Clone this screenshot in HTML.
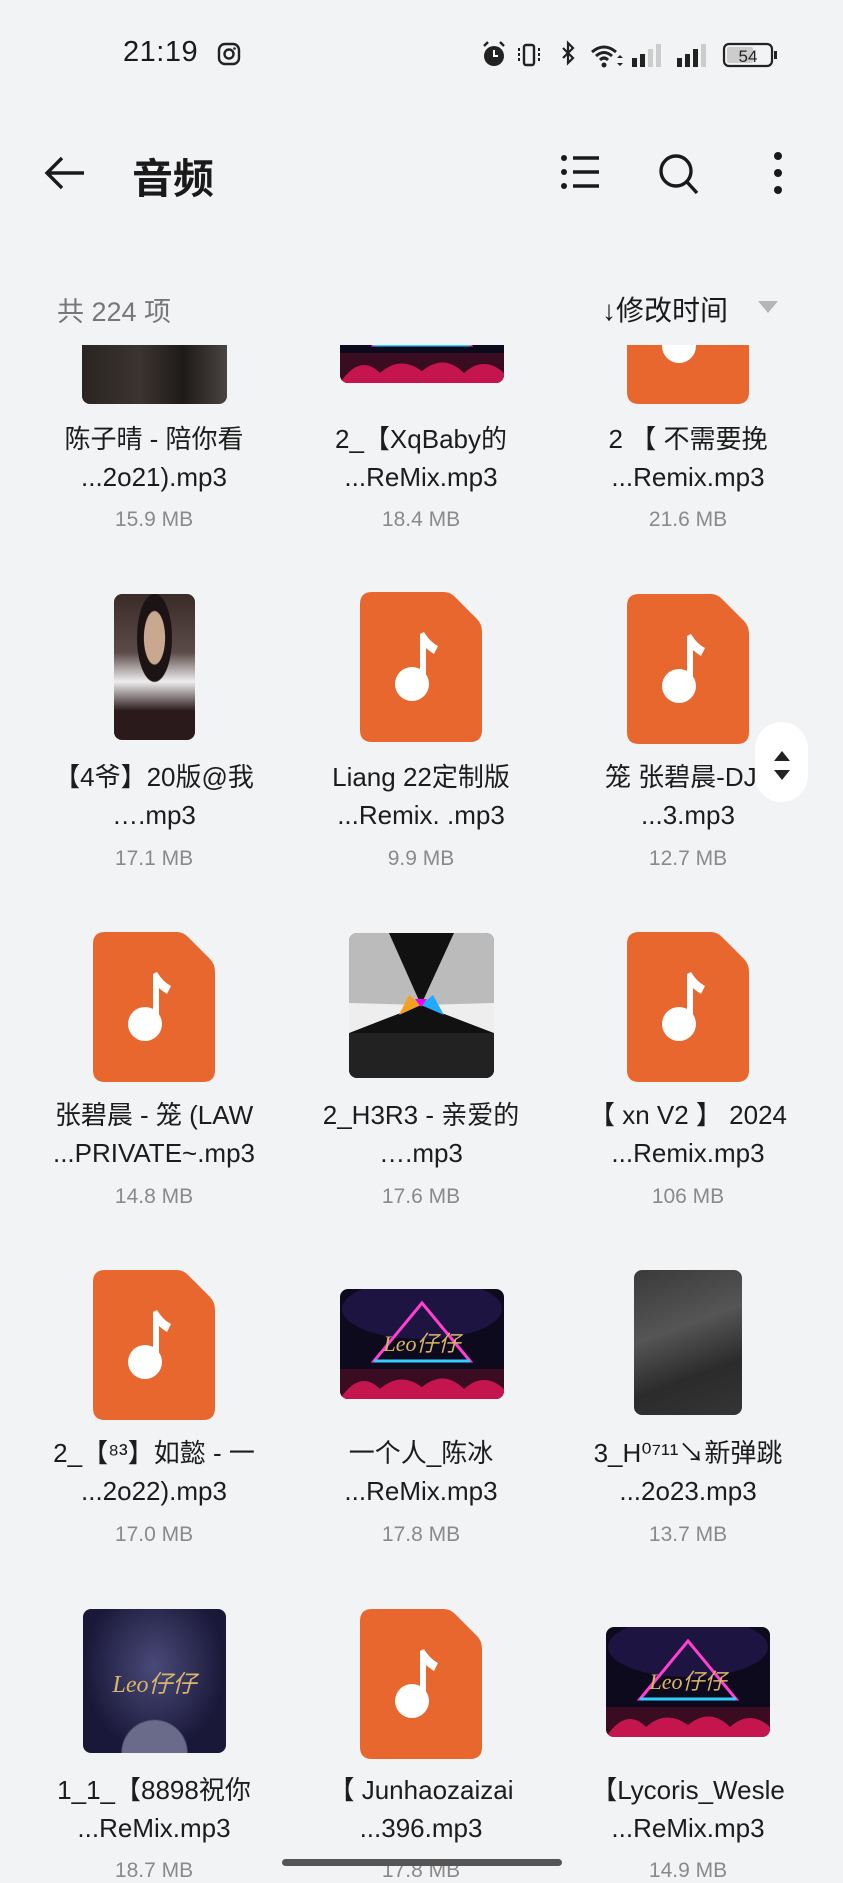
<!DOCTYPE html>
<html><head><meta charset="utf-8"><style>
*{margin:0;padding:0;box-sizing:border-box}
body{width:843px;height:1883px;background:#f2f3f5;position:relative;overflow:hidden;font-family:"Liberation Sans","Noto Sans CJK SC",sans-serif;color:#1a1a1a}
.a{position:absolute}
.t{position:absolute;width:260px;text-align:center;font-size:26px;line-height:38px;color:#1c1c1c;white-space:nowrap}
.s{position:absolute;width:260px;text-align:center;font-size:21px;color:#8a8a8a}
#grid{position:absolute;left:0;top:345px;width:843px;height:1538px;overflow:hidden}
.ic{position:absolute;width:122px;height:150px}
.img{position:absolute;border-radius:8px;overflow:hidden}
</style></head><body>
<svg width="0" height="0" style="position:absolute"><defs>
<symbol id="mf" viewBox="0 0 122 150"><path d="M12 0H84Q90 0 95 5L117 27Q122 32 122 40V138Q122 150 110 150H12Q0 150 0 138V12Q0 0 12 0Z" fill="#e8672f"/><circle cx="52" cy="92" r="17" fill="#fff"/><path d="M60 92V42L64 40Q70 50 78 54L74 62Q68 58 66 56V92Z" fill="#fff"/></symbol>
<symbol id="leo" viewBox="0 0 164 110"><rect width="164" height="110" fill="#0d0a1e"/><ellipse cx="82" cy="20" rx="80" ry="30" fill="#2a1a5a" opacity=".6"/><polygon points="82,14 130,72 34,72" fill="none" stroke="#ff3fd0" stroke-width="3"/><line x1="34" y1="72" x2="130" y2="72" stroke="#3cf" stroke-width="3"/><text x="82" y="62" font-size="22" fill="#d8b56a" text-anchor="middle" font-style="italic" font-family="Liberation Serif,serif">Leo仔仔</text><rect y="80" width="164" height="30" fill="#3a0c22"/><path d="M0 110 Q20 80 40 100 Q60 82 82 98 Q104 80 124 100 Q144 82 164 100V110Z" fill="#c4154e"/></symbol>
</defs></svg>

<!-- status bar -->
<div class="a" style="left:123px;top:36px;font-size:29px;letter-spacing:0.5px">21:19</div>
<svg class="a" style="left:217px;top:42px" width="24" height="24" viewBox="0 0 24 24"><rect x="2" y="2" width="20" height="20" rx="6" fill="none" stroke="#222" stroke-width="2.4"/><circle cx="12" cy="12" r="4.5" fill="none" stroke="#222" stroke-width="2.4"/><circle cx="17.5" cy="6.5" r="1.3" fill="#222"/></svg>
<svg class="a" style="left:481px;top:40px" width="300" height="30" viewBox="0 0 300 30">
<circle cx="13" cy="16" r="10" fill="#222"/><path d="M13 10V16H17" stroke="#fff" stroke-width="2" fill="none"/><path d="M3 6L7 2M23 6L19 2" stroke="#222" stroke-width="2.4"/>
<rect x="43" y="5" width="10" height="20" rx="2" fill="none" stroke="#222" stroke-width="2.4"/><path d="M38 8v14M58 8v14" stroke="#222" stroke-width="2" stroke-dasharray="3 2"/>
<path d="M82 8L92 18L87 23V3L92 8L82 18" stroke="#222" stroke-width="2.2" fill="none"/>
<path d="M111 12Q123 2 135 12M115 16Q123 9 131 16M119 20Q123 16 127 20" stroke="#222" stroke-width="3" fill="none"/><circle cx="123" cy="25" r="2.5" fill="#222"/><path d="M136 18l3 -3 3 3zM136 23l3 3 3 -3z" fill="#222"/>
<rect x="151" y="18" width="5" height="9" fill="#222"/><rect x="159" y="14" width="5" height="13" fill="#222"/><rect x="167" y="9" width="5" height="18" fill="#ccc"/><rect x="175" y="4" width="5" height="23" fill="#ccc"/>
<rect x="196" y="18" width="5" height="9" fill="#222"/><rect x="204" y="14" width="5" height="13" fill="#222"/><rect x="212" y="9" width="5" height="18" fill="#222"/><rect x="220" y="4" width="5" height="23" fill="#ccc"/>
<rect x="243" y="4" width="48" height="22" rx="5" fill="none" stroke="#222" stroke-width="2.2"/><rect x="246" y="7" width="26" height="16" rx="2" fill="#ccc"/><rect x="293" y="11" width="3" height="8" fill="#222"/><text x="267" y="22" font-size="17" text-anchor="middle" fill="#222" font-family="Liberation Sans,sans-serif">54</text>
</svg>

<!-- toolbar -->
<svg class="a" style="left:44px;top:155px" width="44" height="36" viewBox="0 0 44 36"><path d="M40 18H4M18 3L3 18L18 33" stroke="#1a1a1a" stroke-width="3.4" fill="none"/></svg>
<div class="a" style="left:132px;top:145px;font-size:41px;font-weight:bold">音频</div>
<svg class="a" style="left:560px;top:152px" width="40" height="40" viewBox="0 0 40 40"><circle cx="4" cy="6" r="3" fill="#1a1a1a"/><circle cx="4" cy="20" r="3" fill="#1a1a1a"/><circle cx="4" cy="34" r="3" fill="#1a1a1a"/><path d="M13 6H39M13 20H39M13 34H39" stroke="#1a1a1a" stroke-width="3.4"/></svg>
<svg class="a" style="left:657px;top:152px" width="44" height="44" viewBox="0 0 44 44"><circle cx="19" cy="19" r="15" fill="none" stroke="#1a1a1a" stroke-width="3.4"/><path d="M30 30L40 41" stroke="#1a1a1a" stroke-width="3.4"/></svg>
<svg class="a" style="left:771px;top:151px" width="14" height="44" viewBox="0 0 14 44"><circle cx="7" cy="5" r="4" fill="#1a1a1a"/><circle cx="7" cy="22" r="4" fill="#1a1a1a"/><circle cx="7" cy="39" r="4" fill="#1a1a1a"/></svg>

<div class="a" style="left:57px;top:290px;font-size:27px;color:#777">共 224 项</div>
<div class="a" style="left:602px;top:289px;font-size:28px;color:#1a1a1a">↓修改时间</div>
<svg class="a" style="left:757px;top:300px" width="22" height="14" viewBox="0 0 22 14"><path d="M1 1H21L11 13Z" fill="#b5b5b5"/></svg>

<div id="grid">
<div class="img" style="left:82px;top:-60px;width:145px;height:119px;background:linear-gradient(90deg,#2a2522,#3b3431 40%,#1e1a18 70%,#4a4442)"></div>
<svg class="img" style="left:340px;top:-72px" width="164" height="110"><use href="#leo"/></svg>
<svg class="ic" style="left:627px;top:-91px"><use href="#mf"/></svg>
<div class="t" style="left:24px;top:75px">陈子晴 - 陪你看</div><div class="t" style="left:24px;top:113px">...2o21).mp3</div><div class="s" style="left:24px;top:163px">15.9 MB</div>
<div class="t" style="left:291px;top:75px">2_【XqBaby的</div><div class="t" style="left:291px;top:113px">...ReMix.mp3</div><div class="s" style="left:291px;top:163px">18.4 MB</div>
<div class="t" style="left:558px;top:75px">2 【 不需要挽</div><div class="t" style="left:558px;top:113px">...Remix.mp3</div><div class="s" style="left:558px;top:163px">21.6 MB</div>

<div class="img" style="left:114px;top:249px;width:81px;height:146px;background:radial-gradient(ellipse at 50% 30%,#caa890 0 18%,#1c1414 19% 30%,transparent 31%),linear-gradient(180deg,#3a2a28,#5a4a48 40%,#eee 60%,#2a1a1c 80%)"></div>
<svg class="ic" style="left:360px;top:247px"><use href="#mf"/></svg>
<svg class="ic" style="left:627px;top:249px"><use href="#mf"/></svg>
<div class="t" style="left:24px;top:413px">【4爷】20版@我</div><div class="t" style="left:24px;top:451px">….mp3</div><div class="s" style="left:24px;top:502px">17.1 MB</div>
<div class="t" style="left:291px;top:413px">Liang 22定制版</div><div class="t" style="left:291px;top:451px">...Remix. .mp3</div><div class="s" style="left:291px;top:502px">9.9 MB</div>
<div class="t" style="left:558px;top:413px">笼 张碧晨-DJL</div><div class="t" style="left:558px;top:451px">...3.mp3</div><div class="s" style="left:558px;top:502px">12.7 MB</div>

<svg class="ic" style="left:93px;top:587px"><use href="#mf"/></svg>
<svg class="img" style="left:349px;top:588px" width="145" height="145" viewBox="0 0 145 145"><rect width="145" height="145" fill="#111"/><polygon points="0,0 40,0 72,72 0,100" fill="#bbb"/><polygon points="145,0 105,0 72,72 145,100" fill="#bbb"/><polygon points="0,70 72,72 0,100" fill="#eee"/><polygon points="145,70 72,72 145,100" fill="#eee"/><polygon points="60,62 72,72 50,82" fill="#f3a020"/><polygon points="84,62 72,72 95,82" fill="#2af"/><polygon points="66,66 78,66 72,74" fill="#e0f"/><rect y="100" width="145" height="45" fill="#222"/></svg>
<svg class="ic" style="left:627px;top:587px"><use href="#mf"/></svg>
<div class="t" style="left:24px;top:751px">张碧晨 - 笼 (LAW</div><div class="t" style="left:24px;top:789px">...PRIVATE~.mp3</div><div class="s" style="left:24px;top:840px">14.8 MB</div>
<div class="t" style="left:291px;top:751px">2_H3R3 - 亲爱的</div><div class="t" style="left:291px;top:789px">….mp3</div><div class="s" style="left:291px;top:840px">17.6 MB</div>
<div class="t" style="left:558px;top:751px">【 xn V2 】 2024</div><div class="t" style="left:558px;top:789px">...Remix.mp3</div><div class="s" style="left:558px;top:840px">106 MB</div>

<svg class="ic" style="left:93px;top:925px"><use href="#mf"/></svg>
<svg class="img" style="left:340px;top:944px" width="164" height="110"><use href="#leo"/></svg>
<div class="img" style="left:634px;top:925px;width:108px;height:145px;background:linear-gradient(160deg,#3a3a3a,#555 40%,#2b2b2b 70%,#353535)"></div>
<div class="t" style="left:24px;top:1089px">2_【⁸³】如懿 - 一</div><div class="t" style="left:24px;top:1127px">...2o22).mp3</div><div class="s" style="left:24px;top:1178px">17.0 MB</div>
<div class="t" style="left:291px;top:1089px">一个人_陈冰</div><div class="t" style="left:291px;top:1127px">...ReMix.mp3</div><div class="s" style="left:291px;top:1178px">17.8 MB</div>
<div class="t" style="left:558px;top:1089px">3_H⁰⁷¹¹↘新弹跳</div><div class="t" style="left:558px;top:1127px">...2o23.mp3</div><div class="s" style="left:558px;top:1178px">13.7 MB</div>

<div class="img" style="left:83px;top:1264px;width:143px;height:144px;background:radial-gradient(circle at 50% 100%,#6a6a8a 0 20%,transparent 21%),radial-gradient(ellipse at 50% 40%,#4a4a7a,#1a1838 70%)"><div style="position:absolute;left:0;right:0;top:55px;text-align:center;font:italic 24px 'Liberation Serif',serif;color:#d8b56a">Leo仔仔</div></div>
<svg class="ic" style="left:360px;top:1264px"><use href="#mf"/></svg>
<svg class="img" style="left:606px;top:1282px" width="164" height="110"><use href="#leo"/></svg>
<div class="t" style="left:24px;top:1426px">1_1_【8898祝你</div><div class="t" style="left:24px;top:1464px">...ReMix.mp3</div><div class="s" style="left:24px;top:1514px">18.7 MB</div>
<div class="t" style="left:291px;top:1426px">【 Junhaozaizai</div><div class="t" style="left:291px;top:1464px">...396.mp3</div><div class="s" style="left:291px;top:1514px">17.8 MB</div>
<div class="t" style="left:558px;top:1426px">【Lycoris_Wesle</div><div class="t" style="left:558px;top:1464px">...ReMix.mp3</div><div class="s" style="left:558px;top:1514px">14.9 MB</div>
</div>

<div class="a" style="left:755px;top:722px;width:53px;height:80px;border-radius:27px;background:#fff"></div>
<svg class="a" style="left:772px;top:750px" width="20" height="32" viewBox="0 0 20 32"><path d="M10 1L18 11H2Z M2 20H18L10 30Z" fill="#222"/></svg>

<div class="a" style="left:282px;top:1859px;width:280px;height:7px;border-radius:4px;background:#555"></div>
</body></html>
